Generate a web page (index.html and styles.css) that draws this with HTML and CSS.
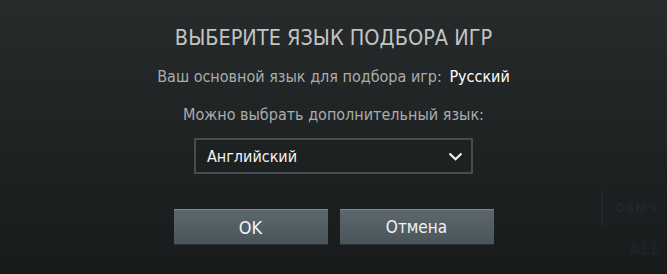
FILE: index.html
```html
<!DOCTYPE html>
<html lang="ru">
<head>
  <meta charset="UTF-8">
  <title>Язык подбора игр</title>
  <link rel="stylesheet" href="styles.css">
</head>
<body>
  <div class="backdrop">
    <div class="ghost-tab">ОБЫЧ</div>
    <div class="ghost-all">ALL</div>
  </div>
  <div class="dialog">
    <h1 class="dialog-title">ВЫБЕРИТЕ ЯЗЫК ПОДБОРА ИГР</h1>
    <p class="primary-lang">Ваш основной язык для подбора игр: <span class="lang-name">Русский</span></p>
    <p class="extra-label">Можно выбрать дополнительный язык:</p>
    <div class="lang-select">
      <span class="lang-value">Английский</span>
      <svg class="chevron" width="15" height="9" viewBox="0 0 15 9">
        <path d="M1.5 1.5 L7.5 7.2 L13.5 1.5" fill="none" stroke="#f2f2f2" stroke-width="2.2"/>
      </svg>
    </div>
    <div class="buttons">
      <button class="btn">OK</button>
      <button class="btn">Отмена</button>
    </div>
  </div>
</body>
</html>
```

FILE: styles.css
```css
html, body {
  margin: 0;
  padding: 0;
  height: 274px;
  overflow: hidden;
}
body {
  font-family: "Liberation Sans Narrow", "DejaVu Sans Condensed", "Open Sans", sans-serif;
  font-stretch: condensed;
  background: linear-gradient(to bottom, #272b2c 0%, #1f2223 55%, #181a1b 100%);
  color: #b9bcbc;
  position: relative;
}

.backdrop {
  position: absolute;
  inset: 0;
  pointer-events: none;
}
.ghost-tab {
  position: absolute;
  left: 601px;
  top: 190px;
  width: 50px;
  height: 36px;
  border-left: 2px solid #222628;
  color: #222729;
  font-size: 12px;
  font-weight: bold;
  line-height: 36px;
  padding-left: 13px;
  letter-spacing: 1px;
}
.ghost-all {
  position: absolute;
  left: 628px;
  top: 238px;
  color: #1e2224;
  font-size: 18px;
  font-weight: bold;
}

.dialog {
  display: flex;
  flex-direction: column;
  align-items: center;
  padding-top: 24px;
}
.dialog-title {
  margin: 0;
  font-size: 21.5px;
  font-weight: normal;
  color: #c2c4c4;
  line-height: 28px;
}
.primary-lang {
  margin: 15px 0 0;
  font-size: 16px;
  line-height: 20px;
  color: #a9adae;
}
.lang-name {
  color: #ffffff;
  margin-left: 3px;
}
.extra-label {
  margin: 18px 0 0;
  font-size: 16px;
  line-height: 20px;
  color: #a9adae;
}

.lang-select {
  box-sizing: border-box;
  width: 279px;
  height: 36px;
  margin-top: 13px;
  border: 2px solid #474c4d;
  background: #1e2122;
  display: flex;
  align-items: center;
  justify-content: space-between;
  padding: 0 8px 0 11px;
}
.lang-value {
  color: #f4f4f4;
  font-size: 16px;
}

.buttons {
  display: flex;
  gap: 12px;
  margin-top: 35px;
}
.btn {
  width: 154px;
  height: 35px;
  border: none;
  border-top: 1px solid #7f898e;
  background: linear-gradient(to bottom, #5d686e 0%, #4a555b 100%);
  box-shadow: 0 1px 0 #2b3134;
  color: #f2f2f2;
  font-family: inherit;
  font-stretch: condensed;
  font-size: 17px;
  padding: 0;
}
.btn:first-child {
  font-size: 18px;
}
```
